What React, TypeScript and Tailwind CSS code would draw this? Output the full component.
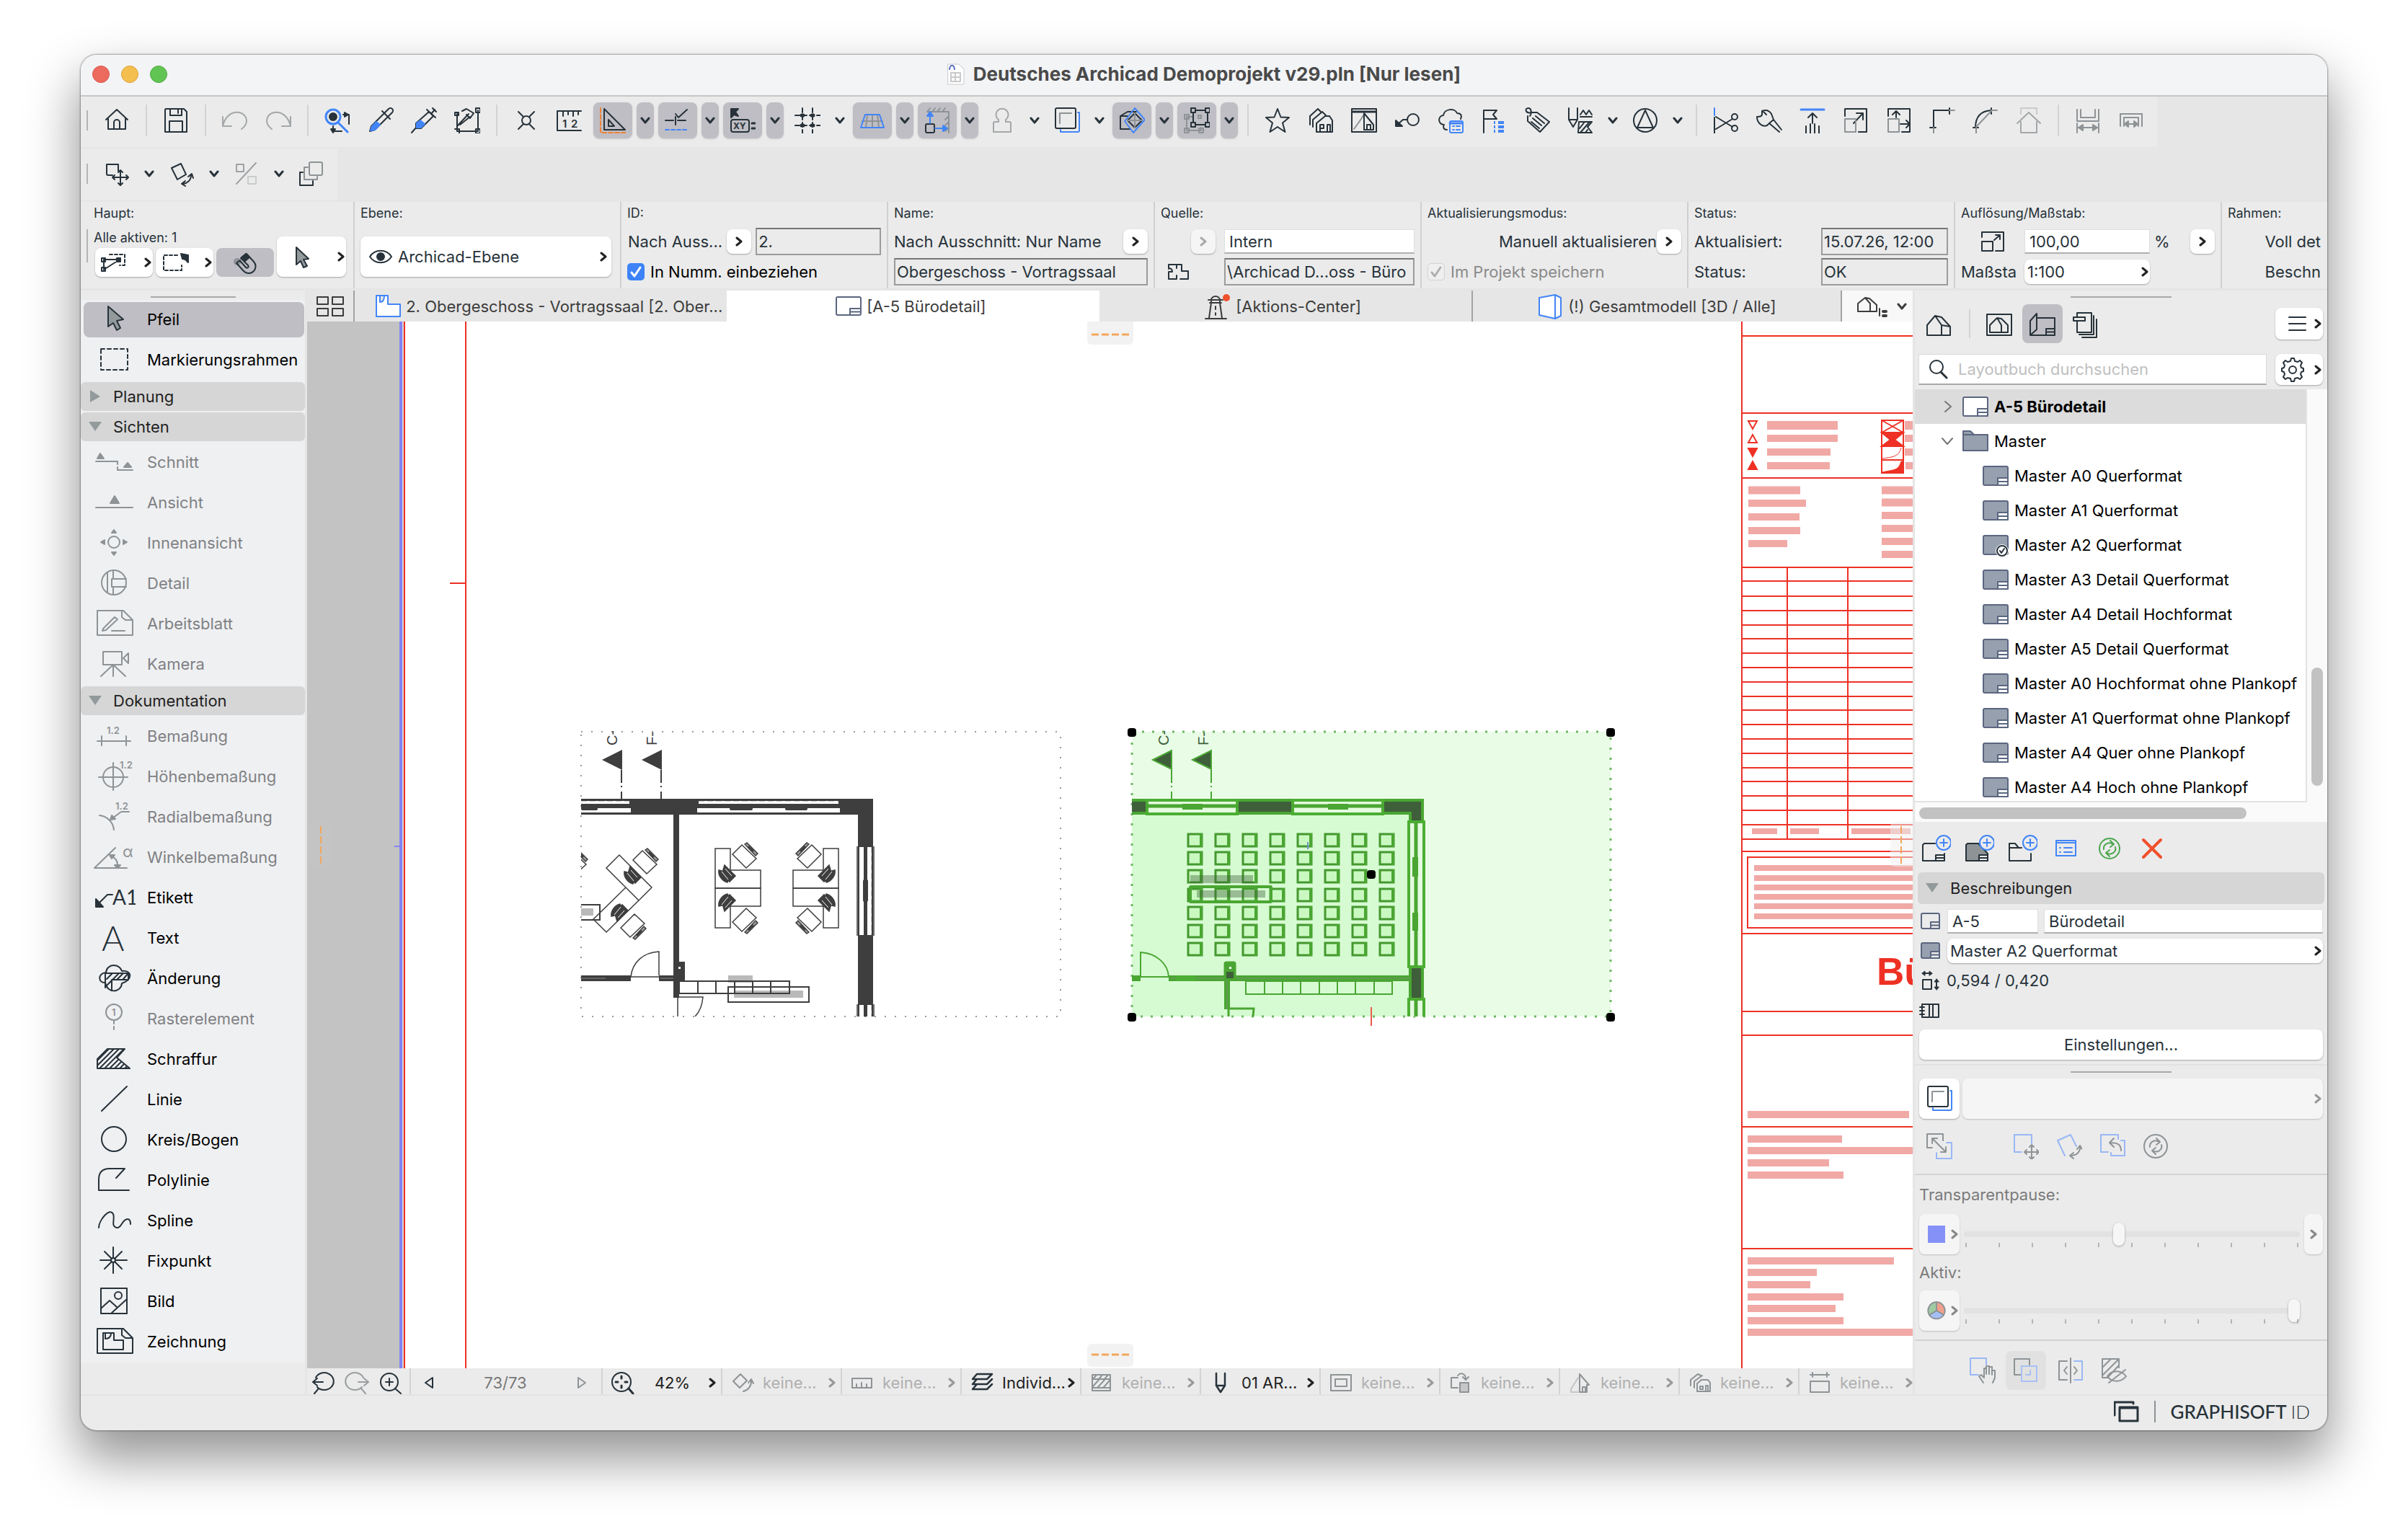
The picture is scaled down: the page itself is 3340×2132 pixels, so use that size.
import React from 'react';

const BLUE = '#4285f8';
const GRAY = '#8e9396';
const RED = '#ee3124';
const PINK = '#f1a9a6';
const INK = '#3e3e3e';
const GREEN = '#4aa632';

interface IconProps {
  w?: number;
  h?: number;
  className?: string;
  children?: React.ReactNode;
}

const Icon: React.FC<IconProps> = ({ w = 36, h = 36, className = '', children }) => (
  <svg
    width={w}
    height={h}
    viewBox={`0 0 ${w} ${h}`}
    fill="none"
    stroke="currentColor"
    strokeWidth={2}
    strokeLinecap="round"
    strokeLinejoin="round"
    className={`shrink-0 ${className}`}
    aria-hidden="true"
  >
    {children}
  </svg>
);

const Down = () => (
  <Icon w={14} h={10}>
    <path d="M2 2 7 8 12 2" strokeWidth={3} />
  </Icon>
);

const Right: React.FC<{ className?: string }> = ({ className = 'text-[#222]' }) => (
  <Icon w={10} h={14} className={className}>
    <path d="M2 2 8 7 2 12" strokeWidth={3} />
  </Icon>
);

/* ---------- toolbar icons, 36 x 36 ---------- */

const pagesIcon = (
  <>
    <rect x="2" y="1" width="28" height="28" rx="2" />
    <path d="M8 22V8H24" stroke={GRAY} />
    <path d="M9 31V34H33a2 2 0 0 0 2-2V7H33" stroke={BLUE} />
  </>
);

const houseIcon = (
  <>
    <path d="M2 32V18L13 5 22 18V32Z M13 5 22 7 34 20V32H22 M22 18 34 20" />
  </>
);

const toolbarIcons: Record<string, React.ReactNode> = {
  home: <path d="M3 17 18 3 33 17 M6 15V30H30V15 M14 30V21a4 4 0 0 1 8 0V30" />,
  save: <path d="M4 2H29L33 6V34H3V3Z M10 2V11H26V2 M21 2V8 M9 34V19H27V34" />,
  undo: <path d="M1 13V26H13 M1 26C4 13 13 5 24 7 35 10 38 22 27 30" stroke="#a4a7a9" />,
  redo: <path d="M35 13V26H23 M35 26C32 13 23 5 12 7 1 10-2 22 9 30" stroke="#a4a7a9" />,
  find: (
    <>
      <circle cx="12" cy="13" r="10" stroke={BLUE} strokeWidth={3} />
      <circle cx="12" cy="13" r="5" fill="currentColor" />
      <path d="M19 21 32 34" stroke={BLUE} strokeWidth={3} />
      <path d="M26 10H34V23 M12 26V33H24" />
      <path d="M28 7v6l5-3Z M9 30h6l-3 5Z" fill="currentColor" />
    </>
  ),
  pipette: (
    <>
      <path d="M3 33 5 26 25 6 29 2a3 3 0 0 1 5 5L30 11 10 31Z M20 5 31 16" />
      <path d="M4 32 6 26 12 20 17 24 10 31Z" fill={BLUE} stroke={BLUE} />
    </>
  ),
  syringe: (
    <>
      <path d="M1 35 7 28V22L25 6 31 12 14 29H7 M22 3 34 14 M28 9 33 3 M30 1 35 6" />
      <path d="M8 28V22L13 18 19 23 14 28Z" fill={BLUE} stroke={BLUE} />
    </>
  ),
  transfer: (
    <>
      <path d="M4 9V33H33V4 M1 30H7V36 M30 30h6v6H30Z M30 1h6v6H30Z M1 7h5v4H1Z" strokeWidth={2} />
      <path d="M4 26 20 9 M11 5 17 2 27 8 22 15 17 10 M8 24 22 13" />
    </>
  ),
  cross: (
    <>
      <path d="M7 6 14 13 M29 6 22 13 M7 30 14 23 M29 30 22 23" />
      <circle cx="18" cy="18" r="6" />
    </>
  ),
  ruler: (
    <>
      <path d="M34 5H1V32H34 M9 5V12 M16 5V10 M23 5V12 M30 5V10" />
      <text x="8" y="28" fontSize="15" fontWeight="600" fill="currentColor" stroke="none">1</text>
      <text x="20" y="28" fontSize="15" fontWeight="600" fill="currentColor" stroke="none">2</text>
    </>
  ),
  square: (
    <>
      <path d="M6 2 35 31H6Z M12 17V26H20Z" />
      <path d="M1 1V35H36" stroke="#f08233" strokeDasharray="6 3" />
    </>
  ),
  guide: (
    <>
      <path d="M1 18H12 M18 18H29 M15 13V24 M15 9 19 14 31 3" />
      <path d="M1 31H30" stroke={BLUE} strokeDasharray="5 3" />
    </>
  ),
  tracker: (
    <>
      <path d="M2 2H12L8 6 12 12 6 10 2 14Z" fill="currentColor" />
      <rect x="2" y="17" width="25" height="17" rx="3" />
      <text x="5" y="30" fontSize="12" fontWeight="700" fill="currentColor" stroke="none">XY</text>
      <path d="M31 22H35 M31 29H35" strokeWidth={3} />
    </>
  ),
  grid: (
    <>
      <path d="M11 1V36 M25 1V36" strokeDasharray="6 4" />
      <path d="M1 11H36 M1 25H36" strokeDasharray="6 4" />
      <path d="M10 11h2 M24 11h2 M10 25h2 M24 25h2" strokeWidth={5} />
    </>
  ),
  plane: (
    <>
      <path d="M18 10V28 M11 10 9 28 M25 10 27 28 M4 19H32" stroke={GRAY} />
      <path d="M8 10H28L34 28H2Z" stroke={BLUE} />
    </>
  ),
  snap: (
    <>
      <path d="M4 6H34V36 M4 6 8 1 M11 6 15 1 M18 6 22 1 M25 6 29 1 M34 12 29 17 M34 20 29 25 M34 28 29 33" stroke={GRAY} />
      <rect x="2" y="23" width="12" height="12" rx="2" />
      <path d="M8 22V10 M15 29H26" stroke={BLUE} />
      <path d="M4 12H12L8 6Z M26 25V33L32 29Z" stroke={BLUE} fill={BLUE} />
    </>
  ),
  stamp: (
    <path d="M13 17a8.500 8.500 0 1 1 10 0V20H28a2 2 0 0 1 2 2V34H6V22a2 2 0 0 1 2-2H13Z" stroke="#a4a7a9" />
  ),
  pages: pagesIcon,
  cube: (
    <>
      <path d="M2 12 12 6H24 M2 12V30H16 M2 12H12" />
      <path d="M22 8 32 18 22 28 12 18Z" />
      <path d="M22 8V28 M12 18H32" stroke={GRAY} />
      <path d="M22 1 36 17 20 35 8 19Z" stroke={BLUE} />
    </>
  ),
  group: (
    <>
      <path d="M4 13H12 M4 13V32H24V28" stroke={GRAY} />
      <path d="M1 10h6v6H1Z M1 29h6v6H1Z M21 29h6v6h-6Z M20 11h4v4h-4Z" stroke={GRAY} />
      <path d="M13 4H33V24H13Z" />
      <path d="M10 1h6v6h-6Z M30 1h6v6h-6Z M10 21h6v6h-6Z M30 21h6v6h-6Z" fill="#bdbdc2" />
    </>
  ),
  star: <path d="M18 2 22.500 13.500 34 14 25 21.500 28.500 34 18 27 7.500 34 11 21.500 2 14 13.500 13.500Z" />,
  houses: (
    <>
      <path d="M3 24V12L14 2 18 6 M7 27V17L20 6 25 11" />
      <path d="M12 34V22L24 12H30L34 18V34Z M17 34V25 M17 24h5v5h-5Z M27 34V24h4V34" />
    </>
  ),
  frameHouse: (
    <>
      <rect x="1" y="2" width="34" height="32" />
      <path d="M1 6H35" strokeWidth={3} />
      <path d="M4 30 14 16 17 11" stroke={GRAY} />
      <path d="M18 8V31H31V24Z M22 31V24h5V31" />
    </>
  ),
  leader: (
    <>
      <circle cx="26" cy="17" r="8" />
      <path d="M18 17H12L4 24" />
      <path d="M2 18V26H11Z" fill="currentColor" />
    </>
  ),
  cloud: (
    <>
      <path d="M13 31C8 31 7 27 9 24 0 23 0 12 8 11 9 2 24 0 27 8 33 8 34 12 32 16" />
      <rect x="17" y="19" width="18" height="16" rx="2" stroke={BLUE} fill="#ebebeb" />
      <path d="M17 22H35" stroke={BLUE} strokeWidth={3} />
      <path d="M21 26H23 M26 26H31 M21 31H23 M26 31H31" stroke={BLUE} />
    </>
  ),
  flag: (
    <>
      <path d="M4 35V4H22L17 10 22 16H4" />
      <path d="M18 21H20 M24 21H32 M18 27H20 M24 27H32 M18 33H20 M24 33H32" stroke={BLUE} strokeWidth={4} strokeLinecap="butt" />
    </>
  ),
  tag: (
    <>
      <path d="M10 7H18L35 20 22 34 5 19V12 M12 15 24 25 M16 12 28 22 M10 20 21 29" />
      <path d="M10 7C2 9 0 1 6 1 10 1 11 8 8 12" />
    </>
  ),
  penHatch: (
    <>
      <path d="M2 1V17L8 27 14 17V1 M2 17H14" />
      <path d="M18 10 22 4 26 10 30 4 34 10 M18 13H34" />
      <path d="M16 20H34L28 27 34 35H15Z M17 29 24 20 M18 35 30 21 M25 35 28 31" />
    </>
  ),
  prism: (
    <>
      <circle cx="18" cy="18" r="16" />
      <path d="M18 4 7 28H29Z" />
    </>
  ),
  split: (
    <>
      <path d="M2 1V11" stroke={BLUE} />
      <path d="M2 14V36 M4 13 27 27 M4 30 27 16" />
      <circle cx="30" cy="13" r="4" />
      <circle cx="30" cy="29" r="4" />
    </>
  ),
  wrench: (
    <path d="M1 13C4 12 7 14 8 10V5C13 3 18 4 21 9L24 17 35 31M1 13C1 20 7 28 15 25L18 22 32 34M18 22 24 17 M9 5 14 10" />
  ),
  elevate: (
    <>
      <path d="M2 3H34" stroke={BLUE} strokeWidth={3} />
      <path d="M18 9V22 M12 14 18 8 24 14 M9 26V36 M15 23V36 M21 23V36 M27 26V36" />
    </>
  ),
  resize: (
    <>
      <path d="M3 12V2H33V34H22 M15 22 28 8 M19 8H28V17" />
      <path d="M3 16H18V34H3Z" stroke={GRAY} />
    </>
  ),
  stretch: (
    <>
      <path d="M3 12V2H33V34H22 M14 14V6 M9 10 14 5 19 10 M20 23H32 M28 18 33 23 28 28" />
      <path d="M3 16H18V34H3Z" stroke={GRAY} />
    </>
  ),
  corner: (
    <>
      <path d="M6 28V4H28 M28 1V9 M1 28H9" />
      <path d="M28 4H35 M6 28V36" stroke={GRAY} />
    </>
  ),
  fillet: (
    <>
      <path d="M4 28C4 14 10 5 26 4 M26 1V9 M1 28H8" />
      <path d="M26 4H34 M5 27 26 5 M5 28V36" stroke={GRAY} />
    </>
  ),
  roof: (
    <>
      <path d="M7 9V1H29V9" stroke="#c9cbcc" />
      <path d="M2 22 18 7 34 22 M7 20V35H29V20" stroke="#a4a7a9" />
    </>
  ),
  dimA: (
    <>
      <path d="M3 3V19H33V3 M8 3V14H28V3 M3 22V35 M33 22V35 M5 28H31" stroke={GRAY} />
      <path d="M5 28 11 24V32Z M31 28 25 24V32Z" stroke={GRAY} fill={GRAY} />
    </>
  ),
  dimB: (
    <>
      <path d="M3 26V9H33V26 M8 26V14H28V26 M12 23H24" stroke={GRAY} />
      <path d="M9 23 14 19V27Z M27 23 22 19V27Z" stroke={GRAY} fill={GRAY} />
    </>
  ),
  move: (
    <>
      <path d="M12 20H6a2 2 0 0 1-2-2V5H20V14" />
      <path d="M23 14V33 M13 23H33 M20 16 23 13 26 16 M20 31 23 34 26 31 M15 20 12 23 15 26 M31 20 34 23 31 26" />
    </>
  ),
  rotate: (
    <>
      <path d="M4 10 17 4 24 19 12 26Z" />
      <path d="M31 20C31 27 26 31 20 32 M27 22 32 18 34 24 M23 28 18 32 23 35" />
    </>
  ),
  mirror: (
    <>
      <path d="M4 5H14V15H4Z M31 3 4 32" stroke="#9fa2a4" />
      <path d="M20 22H31V32H20Z" stroke="#c9cbcc" />
    </>
  ),
  copies: (
    <>
      <rect x="15" y="2" width="18" height="18" rx="2" stroke={GRAY} />
      <path d="M13 9H8V26H26V22" stroke={GRAY} />
      <path d="M6 16H2V34H20V28" />
    </>
  ),
};

type Tool = { icon: string; menu?: boolean; on?: boolean };

const mainTools: (Tool | null)[] = [
  { icon: 'home' }, null, { icon: 'save' }, null, { icon: 'undo' }, { icon: 'redo' }, null,
  { icon: 'find' }, { icon: 'pipette' }, { icon: 'syringe' }, { icon: 'transfer' }, null,
  { icon: 'cross' }, { icon: 'ruler' },
  { icon: 'square', menu: true, on: true },
  { icon: 'guide', menu: true, on: true },
  { icon: 'tracker', menu: true, on: true },
  { icon: 'grid', menu: true },
  { icon: 'plane', menu: true, on: true },
  { icon: 'snap', menu: true, on: true },
  { icon: 'stamp', menu: true },
  { icon: 'pages', menu: true },
  { icon: 'cube', menu: true, on: true },
  { icon: 'group', menu: true, on: true },
  null,
  { icon: 'star' }, { icon: 'houses' }, { icon: 'frameHouse' }, { icon: 'leader' }, { icon: 'cloud' },
  { icon: 'flag' }, { icon: 'tag' }, { icon: 'penHatch', menu: true }, { icon: 'prism', menu: true },
  null,
  { icon: 'split' }, { icon: 'wrench' }, { icon: 'elevate' }, { icon: 'resize' }, { icon: 'stretch' },
  { icon: 'corner' }, { icon: 'fillet' }, { icon: 'roof' },
  null,
  { icon: 'dimA' }, { icon: 'dimB' },
];

const editTools: Tool[] = [
  { icon: 'move', menu: true },
  { icon: 'rotate', menu: true },
  { icon: 'mirror', menu: true },
  { icon: 'copies' },
];

const ToolButton: React.FC<Tool> = ({ icon, menu, on }) => {
  const look = on ? 'bg-[#bfbec4] shadow-sm' : '';
  return (
    <>
      <button aria-label={icon} className={`flex h-[50px] w-[54px] shrink-0 items-center justify-center rounded-lg ${look}`}>
        <Icon>{toolbarIcons[icon]}</Icon>
      </button>
      {menu && (
        <button aria-label={`${icon} menu`} className={`flex h-[50px] w-6 shrink-0 items-center justify-center rounded-lg ${look}`}>
          <Down />
        </button>
      )}
    </>
  );
};

const Grip = () => <div className="h-7 w-0.5 shrink-0 bg-[#b4b4b4]" />;

const Toolbars = () => (
  <div className="flex flex-col items-start gap-0.5 bg-[#e6e6e6]">
    <div className="flex h-[70px] items-center gap-1.5 bg-[#ebebeb] pb-1 pl-2 pr-[9px]">
      <Grip />
      <span className="w-px" />
      {mainTools.map((tool, i) =>
        tool ? (
          <ToolButton key={i} {...tool} />
        ) : (
          <div key={i} className="flex w-4 shrink-0 justify-center">
            <div className="h-11 w-0.5 bg-[#d3d3d3]" />
          </div>
        )
      )}
    </div>
    <div className="flex h-[72px] items-center gap-1.5 bg-[#ebebeb] pb-0.5 pl-2 pr-[9px]">
      <Grip />
      <span className="w-px" />
      {editTools.map((tool) => (
        <ToolButton key={tool.icon} {...tool} />
      ))}
    </div>
  </div>
);

/* ---------- info box ---------- */

const InfoCell: React.FC<{ label: string; children: React.ReactNode; className?: string }> = ({
  label,
  children,
  className = 'w-[370px]',
}) => (
  <div className={`flex shrink-0 flex-col border-l-2 border-[#d0d0d0] pl-2 pr-2 ${className}`}>
    <div className="h-[34px] pt-1 text-[18px] leading-6">{label}</div>
    {children}
  </div>
);

const ArrowButton: React.FC<{ name: string; disabled?: boolean }> = ({ name, disabled }) => (
  <button
    aria-label={name}
    disabled={disabled}
    className={`flex h-[34px] w-[34px] shrink-0 items-center justify-center rounded-lg shadow-[0_1px_2px_rgba(0,0,0,0.3)] ${disabled ? 'bg-[#f5f5f5]' : 'bg-white'}`}
  >
    <Right className={disabled ? 'text-[#aaa]' : 'text-[#222]'} />
  </button>
);

const Sunken: React.FC<{ name: string; value: string; className?: string }> = ({ name, value, className = '' }) => (
  <input
    aria-label={name}
    readOnly
    value={value}
    className={`h-[38px] min-w-0 border-2 border-[#9b9b9b] border-t-[#767676] bg-[#ebebeb] px-0.5 ${className}`}
  />
);

const PlainField: React.FC<{ name: string; value: string; className?: string }> = ({ name, value, className = '' }) => (
  <input
    aria-label={name}
    defaultValue={value}
    className={`h-[34px] min-w-0 border border-b-2 border-[#dedede] border-b-[#b0b0b0] bg-white px-1.5 ${className}`}
  />
);

const CheckBox: React.FC<{ label: string; disabled?: boolean }> = ({ label, disabled }) => (
  <label className={`flex items-center gap-2 ${disabled ? 'text-[#8a8a8a]' : 'text-black'}`}>
    <span className="relative flex">
      <input
        type="checkbox"
        defaultChecked
        disabled={disabled}
        className="h-6 w-6 appearance-none rounded-[5px] bg-[#3d83f7] disabled:border disabled:border-[#d2d2d2] disabled:bg-[#efefef]"
      />
      <Icon w={24} h={24} className={`pointer-events-none absolute inset-0 ${disabled ? 'text-[#b0b0b0]' : 'text-white'}`}>
        <path d="M6 13 10 18 18 6" strokeWidth={3} />
      </Icon>
    </span>
    {label}
  </label>
);

const InfoBox = () => (
  <div className="flex h-[123px] overflow-hidden border-b-[3px] border-[#e5e5e5] whitespace-nowrap">
    <div className="flex w-[378px] shrink-0 pl-2">
      <div className="mt-[38px] h-[46px] w-0.5 bg-[#b4b4b4]" />
      <div className="flex flex-col pl-2 text-[18px] leading-6">
        <div className="h-[38px] pt-1">Haupt:</div>
        <div className="flex items-end gap-1">
          <div>
            <div className="h-[26px]">Alle aktiven: 1</div>
            <div className="flex gap-1 pl-0.5">
              <button aria-label="Auswahlmethode" className="flex h-10 w-20 items-center justify-between rounded-lg bg-white pl-2 pr-0.5 shadow-[0_1px_2px_rgba(0,0,0,0.3)]">
                <Icon w={36} h={28}>
                  <path d="M12 3H33V18H26" strokeDasharray="4 3" />
                  <path d="M4 24V10H26L4 24 M1 8h5v5H1Z M22 8h5v5h-5Z M1 21h5v5H1Z" />
                </Icon>
                <Right />
              </button>
              <button aria-label="Markierung" className="flex h-10 w-20 items-center justify-between rounded-lg bg-white pl-2 pr-0.5 shadow-[0_1px_2px_rgba(0,0,0,0.3)]">
                <Icon w={38} h={28}>
                  <path d="M22 4H3V25H28V18" strokeDasharray="4 3" />
                  <path d="M27 2 37 4V14L33 10 29 9Z" fill="currentColor" />
                </Icon>
                <Right />
              </button>
              <button aria-label="Magnet" className="flex h-10 w-20 items-center justify-center rounded-lg bg-[#bfbec4]">
                <Icon w={36} h={32}>
                  <circle cx="7" cy="15" r="5" fill="#8e9396" stroke="none" />
                  <path d="M20 4 30 15A9 9 0 0 1 16 28L6 17 M12 10 22 20A1 1 0 0 1 19 23L11 14 M20 4 13 10 M11 13 6 17" />
                  <path d="M19 4 24 9 18 14 13 9Z" fill="currentColor" />
                </Icon>
              </button>
            </div>
          </div>
          <button aria-label="Pfeilwerkzeug" className="flex h-14 w-24 items-center justify-between rounded-lg bg-white pl-6 pr-0.5 shadow-[0_1px_2px_rgba(0,0,0,0.3)]">
            <Icon w={24} h={32}>
              <path d="M3 3 20 19 13 20 18 29 13 31 9 22 3 27Z" fill="#939a9c" />
            </Icon>
            <Right />
          </button>
        </div>
      </div>
    </div>

    <InfoCell label="Ebene:">
      <button className="mt-3.5 flex h-14 w-[348px] items-center rounded-lg bg-white pl-3 pr-1.5 shadow-[0_1px_2px_rgba(0,0,0,0.3)]">
        <Icon w={32} h={24}>
          <path d="M1 12C8 1 24 1 31 12 24 23 8 23 1 12Z" />
          <circle cx="16" cy="12" r="5" fill="currentColor" />
        </Icon>
        <span className="flex-1 pl-2 text-left">Archicad-Ebene</span>
        <Right />
      </button>
    </InfoCell>

    <InfoCell label="ID:">
      <div className="flex h-[42px] items-center gap-1.5">
        <span className="pl-px">Nach Auss...</span>
        <ArrowButton name="ID-Quelle" />
        <Sunken name="ID" value="2." className="flex-1" />
      </div>
      <div className="flex h-[42px] items-center">
        <CheckBox label="In Numm. einbeziehen" />
      </div>
    </InfoCell>

    <InfoCell label="Name:">
      <div className="flex h-[42px] items-center justify-between">
        <span>Nach Ausschnitt: Nur Name</span>
        <ArrowButton name="Namensquelle" />
      </div>
      <div className="flex h-[42px] items-center">
        <Sunken name="Name" value="Obergeschoss - Vortragssaal" className="flex-1" />
      </div>
    </InfoCell>

    <InfoCell label="Quelle:">
      <div className="flex h-[42px] items-center gap-3 pl-[42px]">
        <ArrowButton name="Quelle wählen" disabled />
        <PlainField name="Quelle" value="Intern" className="flex-1" />
      </div>
      <div className="flex h-[42px] items-center justify-between pl-2.5">
        <Icon w={30} h={24}>
          <path d="M1 8V2H19V11H28V22H17 M11 22H1V12 M1 12H6 M12 2V7 M12 17V22 M1 7C4 7 6 9 6 12" />
        </Icon>
        <Sunken name="Pfad" value="\Archicad D...oss - Büro" className="w-[264px]" />
      </div>
    </InfoCell>

    <InfoCell label="Aktualisierungsmodus:">
      <div className="flex h-[42px] items-center justify-end">
        <span>Manuell aktualisieren</span>
        <ArrowButton name="Aktualisierungsmodus" />
      </div>
      <div className="flex h-[42px] items-center">
        <CheckBox label="Im Projekt speichern" disabled />
      </div>
    </InfoCell>

    <InfoCell label="Status:">
      <div className="flex h-[42px] items-center justify-between">
        <span>Aktualisiert:</span>
        <Sunken name="Aktualisiert" value="15.07.26, 12:00" className="w-44" />
      </div>
      <div className="flex h-[42px] items-center justify-between">
        <span>Status:</span>
        <Sunken name="Status" value="OK" className="w-44" />
      </div>
    </InfoCell>

    <InfoCell label="Auflösung/Maßstab:">
      <div className="flex h-[42px] items-center">
        <Icon w={36} h={32} className="ml-[26px] mr-[26px]">
          <path d="M3 10V3H33V29H22 M20 14 28 7 M22 7H28V13 M3 16H18V29H3Z" />
        </Icon>
        <PlainField name="Auflösung" value="100,00" className="w-[174px]" />
        <span className="pl-1.5">%</span>
        <span className="ml-auto">
          <ArrowButton name="Einheit" />
        </span>
      </div>
      <div className="flex h-[42px] items-center">
        <span className="w-[88px]">Maßsta</span>
        <button className="flex h-[34px] w-[174px] items-center justify-between rounded-lg bg-white pl-1 pr-0.5 shadow-[0_1px_2px_rgba(0,0,0,0.3)]">
          1:100
          <Right />
        </button>
      </div>
    </InfoCell>

    <InfoCell label="Rahmen:" className="w-[147px]">
      <div className="flex h-[42px] items-center justify-end">Voll det</div>
      <div className="flex h-[42px] items-center justify-end">Beschn</div>
    </InfoCell>
  </div>
);

/* ---------- tool palette, 60 x 40 icons ---------- */

const hatch = 'M-10 40 30 0 M-3 40 37 0 M4 40 44 0 M11 40 51 0 M18 40 58 0 M25 40 65 0 M32 40 72 0 M39 40 79 0';

const paletteIcons: Record<string, React.ReactNode> = {
  Pfeil: <path d="M22 3 43 21 34 23 39 33 34 36 29 26 22 31Z" fill="#939a9c" />,
  Markierungsrahmen: <rect x="12" y="6" width="37" height="29" strokeDasharray="5 4" />,
  Schnitt: (
    <>
      <path d="M5 20H35 M35 32H56" />
      <path d="M35 20V31" strokeDasharray="4 4" />
      <path d="M7 16H16L11 9Z M44 28H54L49 22Z" fill="currentColor" />
    </>
  ),
  Ansicht: (
    <>
      <path d="M5 28H56" />
      <path d="M25 22H37L31 12Z" fill="currentColor" />
    </>
  ),
  Innenansicht: (
    <>
      <circle cx="30" cy="20" r="8" />
      <path d="M27 7H33L30 3Z M27 34H33L30 38Z M17 17V23L12 20Z M43 17V23L48 20Z" fill="currentColor" />
    </>
  ),
  Detail: (
    <>
      <circle cx="30" cy="20" r="17" />
      <path d="M21 6V34 M29 3V15 M29 26V37 M27 15H47 M27 26H47 M27 15V26" />
    </>
  ),
  Arbeitsblatt: (
    <>
      <path d="M7 3H43L56 16V37H7Z M41 3V12L46 16H56" />
      <path d="M15 28 31 12 35 15 19 30 14 31Z M27 31H45" />
    </>
  ),
  Kamera: <path d="M15 4H41V22H15Z M43 13 50 6V20Z M29 22V38 M29 22 12 38 M29 22 46 38" />,
  Bemaßung: (
    <>
      <path d="M7 28H53 M13 21V34 M47 21V34" />
      <text x="20" y="18" fontSize="13" fontWeight="600" fill="currentColor" stroke="none">1.2</text>
    </>
  ),
  Höhenbemaßung: (
    <>
      <circle cx="29" cy="22" r="14" />
      <path d="M9 22H49 M29 2V40" />
      <text x="38" y="10" fontSize="13" fontWeight="600" fill="currentColor" stroke="none">1.2</text>
    </>
  ),
  Radialbemaßung: (
    <>
      <path d="M10 19C20 20 29 28 30 39 M51 14H40L28 23" />
      <path d="M25 25 27 19 32 24Z" fill="currentColor" />
      <text x="32" y="11" fontSize="13" fontWeight="600" fill="currentColor" stroke="none">1.2</text>
    </>
  ),
  Winkelbemaßung: (
    <>
      <path d="M32 8 3 36H48 M27 20C32 22 35 26 35 32" />
      <path d="M24 18H31L27 23Z M31 32H39L35 36Z" fill="currentColor" />
      <text x="42" y="21" fontSize="22" fill="currentColor" stroke="none">α</text>
    </>
  ),
  Etikett: (
    <>
      <path d="M28 17H21L9 29" />
      <path d="M5 23V34H15Z" fill="currentColor" />
      <text x="28" y="31" fontSize="28" fontFamily="Lato" fill="currentColor" stroke="none">A1</text>
    </>
  ),
  Text: <text x="13" y="39" fontSize="48" fontWeight="300" fontFamily="Lato" fill="currentColor" stroke="none">A</text>,
  Änderung: (
    <>
      <path d="M18 27C8 28 7 14 19 13 20 0 38 0 41 11 56 9 56 24 41 28 40 42 20 42 18 27Z" />
      <path d="M18 14H50V23H27V38 M18 14V34 M20 22 27 15 M20 31 36 15 M35 22 42 15 M43 22 49 15" />
    </>
  ),
  Rasterelement: (
    <>
      <circle cx="30" cy="12" r="11" />
      <path d="M30 24V40" strokeDasharray="4 4" />
      <text x="27" y="17" fontSize="13" fontWeight="600" fill="currentColor" stroke="none">1</text>
    </>
  ),
  Schraffur: (
    <>
      <clipPath id="fill-area">
        <path d="M7 21 21 7H45L34 19 52 34H7Z" />
      </clipPath>
      <path d={hatch} clipPath="url(#fill-area)" />
      <path d="M7 21 21 7H45L34 19 52 34H7Z" />
    </>
  ),
  Linie: <path d="M13 37 48 3" />,
  'Kreis/Bogen': <circle cx="30" cy="20" r="17" />,
  Polylinie: <path d="M51 35H9V20C9 10 14 5 24 5H45L33 18" />,
  Spline: <path d="M9 31C9 21 24 2 29 12 32 19 25 29 34 31 41 32 41 19 49 19 53 19 53 23 53 26" />,
  Fixpunkt: (
    <>
      <circle cx="29" cy="20" r="3" />
      <path d="M29 17V2 M29 23V38 M26 20H11 M32 20H48 M27 18 17 8 M31 18 41 8 M27 22 17 32 M31 22 41 32" />
    </>
  ),
  Bild: (
    <>
      <rect x="12" y="3" width="36" height="35" />
      <circle cx="36" cy="13" r="5" />
      <path d="M12 31 24 20 34 29 M27 37 48 18" />
    </>
  ),
  Zeichnung: (
    <>
      <path d="M7 3H43L56 16V37H7Z M41 3V12L46 16H56" />
      <path d="M15 9H30V19H43V32H15Z M18 9V17C24 17 26 14 26 9" />
    </>
  ),
};

const sections: { title?: string; open?: boolean; items: string[] }[] = [
  { items: ['Pfeil', 'Markierungsrahmen'] },
  { title: 'Planung', items: [] },
  { title: 'Sichten', open: true, items: ['Schnitt', 'Ansicht', 'Innenansicht', 'Detail', 'Arbeitsblatt', 'Kamera'] },
  {
    title: 'Dokumentation',
    open: true,
    items: [
      'Bemaßung', 'Höhenbemaßung', 'Radialbemaßung', 'Winkelbemaßung', 'Etikett', 'Text', 'Änderung', 'Rasterelement',
      'Schraffur', 'Linie', 'Kreis/Bogen', 'Polylinie', 'Spline', 'Fixpunkt', 'Bild', 'Zeichnung',
    ],
  },
];

const disabledTools = new Set([
  'Schnitt', 'Ansicht', 'Innenansicht', 'Detail', 'Arbeitsblatt', 'Kamera',
  'Bemaßung', 'Höhenbemaßung', 'Radialbemaßung', 'Winkelbemaßung', 'Rasterelement',
]);

const Triangle: React.FC<{ open?: boolean }> = ({ open }) => (
  <Icon w={18} h={18} className="text-[#939a9c]">
    <path d={open ? 'M0 2H18L9 15Z' : 'M2 0V17L16 9Z'} fill="currentColor" stroke="none" />
  </Icon>
);

const DragHandle: React.FC<{ className: string }> = ({ className }) => (
  <div className={`mx-auto h-0.5 bg-[#a9a9a9] ${className}`} />
);

const ToolPalette = () => (
  <aside className="w-[314px] shrink-0 border-r-[3px] border-[#e5e5e5] pb-11">
    <div className="h-[13px] pt-2">
      <DragHandle className="w-[118px]" />
    </div>
    <div className="bg-[#eff0f2]">
      {sections.map((section, i) => (
        <section key={i}>
          {section.title && (
            <button className="my-0.5 flex h-10 w-full items-center gap-4 rounded-md bg-[#d6d6d6] pl-[11px]">
              <Triangle open={section.open} />
              <span className="text-[#222]">{section.title}</span>
            </button>
          )}
          {section.items.map((name) => {
            const disabled = disabledTools.has(name);
            return (
              <div key={name} className="flex h-14 items-center pb-0.5 pl-1 pr-px">
                <button
                  disabled={disabled}
                  className={`flex h-[49px] w-full items-center gap-4 rounded-lg pl-3 ${name === 'Pfeil' ? 'bg-[#bfbec4]' : ''} ${disabled ? 'text-[#8e9396]' : ''}`}
                >
                  <Icon w={60} h={42}>{paletteIcons[name]}</Icon>
                  <span className={disabled ? 'text-[#7f8184]' : 'text-black'}>{name}</span>
                </button>
              </div>
            );
          })}
        </section>
      ))}
    </div>
  </aside>
);

/* ---------- document tabs ---------- */

const tabs = [
  {
    text: '2. Obergeschoss - Vortragssaal [2. Ober...',
    align: 'justify-end pr-1.5',
    icon: <path d="M2 3H18V15H35V32H2Z M7 3V12C12 12 13 8 13 3" stroke={BLUE} fill="#fff" />,
  },
  {
    text: '[A-5 Bürodetail]',
    active: true,
    align: 'justify-center pr-1.5',
    icon: (
      <g stroke="#5b6680">
        <rect x="1" y="5" width="34" height="25" rx="2" />
        <path d="M20 30V21H35 M20 25.500H35" />
      </g>
    ),
  },
  {
    text: '[Aktions-Center]',
    align: 'justify-center border-r-2 border-[#a3a3a3] pr-1.5',
    icon: (
      <>
        <path d="M9 9a6 5 0 0 1 12 0 M5 9H25 M7 13H23 M9 13 6 34 M21 13 24 34 M1 35H30 M15 18V22 M15 27V30 M9 9V13 M21 9V13" />
        <circle cx="30" cy="6" r="5" fill="#f0502c" stroke="none" />
      </>
    ),
  },
  {
    text: '(!) Gesamtmodell [3D / Alle]',
    align: 'justify-center border-r-2 border-[#a3a3a3]',
    icon: <path d="M3 6 25 2 33 6V31L25 35 3 30Z M25 2V35" stroke={BLUE} fill="#fff" />,
  },
];

const DocumentTabs = () => (
  <div className="flex h-[43px] shrink-0 bg-[#e6e6e6] text-[#3c3c3c]">
    <button aria-label="Übersicht" className="flex w-[66px] shrink-0 items-center justify-center border-r-2 border-[#a3a3a3]">
      <Icon w={40} h={30}>
        <path d="M2 2H17V12H2Z M23 2H38V12H23Z M2 18H17V28H2Z M23 18H38V28H23Z" />
      </Icon>
    </button>
    {tabs.map((tab) => (
      <button
        key={tab.text}
        className={`flex min-w-0 flex-1 items-center gap-[7px] overflow-hidden whitespace-nowrap ${tab.align} ${tab.active ? 'bg-white' : ''}`}
      >
        <Icon>{tab.icon}</Icon>
        {tab.text}
      </button>
    ))}
    <button aria-label="Ansicht wählen" className="flex w-[98px] shrink-0 items-center justify-between bg-[#f8f8f8] pl-5 pr-2">
      <Icon w={44} h={30}>
        <path d="M2 22V11L12 3 19 11V22Z M12 3 18 4 28 13V22H19" />
        <path d="M32 18V28" />
        <path d="M37 22H41 M37 28H41" strokeWidth={4} />
      </Icon>
      <Down />
    </button>
  </div>
);

/* ---------- drawing area ---------- */

const Chair = () => (
  <g>
    <path d="M1016 1185 1029 1172 1049 1191 1035 1204Z" />
    <path d="M1033 1171 1036 1169 1051 1184 1048 1187Z" fill="#999" />
    <path d="M1038 1174 1045 1181" strokeWidth={3} />
  </g>
);

const Computer = () => (
  <g fill={INK}>
    <path d="M1005 1200 1020 1215 1012 1223 1002 1210Z" />
    <path d="M997 1207C996 1214 1001 1222 1009 1224L1011 1220 1001 1208Z" />
    <path d="M1006 1205 1015 1215" stroke="#fff" strokeWidth={1} />
    <path d="M1001 1209 1010 1220" stroke="#fff" strokeWidth={1} />
  </g>
);

const DeskHalf = () => (
  <g>
    <path d="M992 1232V1177H1013V1207H1055V1232Z" />
    <Chair />
    <Computer />
  </g>
);

const DeskGroup = () => (
  <g>
    <DeskHalf />
    <g transform="translate(0 2464) scale(1 -1)">
      <DeskHalf />
    </g>
  </g>
);

const OfficePlan = () => (
  <g fill="none" stroke={INK} strokeWidth={1.500}>
    <clipPath id="office">
      <rect x="806" y="1014" width="666" height="396" />
    </clipPath>
    <rect x="806" y="1015" width="665" height="395" stroke="#9a9a9a" strokeWidth={2} strokeDasharray="2 12" />
    <g clipPath="url(#office)">
      <g fill={INK} stroke="none" fontSize="20" fontFamily="Liberation Sans">
        <text transform="translate(856 1034) rotate(-90)">C-</text>
        <text transform="translate(911 1034) rotate(-90)">F-</text>
        <path d="M835 1054 863 1040V1068Z M890 1054 918 1040V1068Z" />
        <path d="M861 1068h2v18h-2Z M861 1090h2v2h-2Z M861 1098h2v18h-2Z M916 1068h2v18h-2Z M916 1090h2v2h-2Z M916 1098h2v10h-2Z" />
        <path d="M806 1108H1211V1410H1190V1130H806Z" />
        <path d="M934 1130h8V1334h8V1361H942V1384H934Z M806 1353H875V1361H806Z M914 1353H936V1361H914Z" />
      </g>
      <g fill="#fff" stroke="none">
        <path d="M806 1111H873V1115H806Z M806 1121H875V1127H806Z M969 1111H1163V1115H969Z M967 1121H1165V1127H967Z" />
        <path d="M1192 1175h6V1297h-6Z M1203 1175h6V1297h-6Z M1192 1394h6V1410h-6Z M1203 1394h6V1410h-6Z M941 1341h3v3h-3Z" />
      </g>
      <path d="M806 1110.500H873 M969 1110.500H1163 M1209.500 1175V1297 M1209.500 1394V1410" strokeDasharray="8 4" />
      <path d="M1189 1174V1298 M1212 1174V1298 M1189 1393V1410 M1212 1393V1410" />
      <g fill={INK} stroke="none">
        <rect x="806" y="1115" width="23" height="9" rx="2" />
        <rect x="1012" y="1115" width="32" height="9" rx="2" />
        <rect x="1089" y="1115" width="31" height="9" rx="2" />
        <rect x="1197" y="1220" width="7" height="31" rx="2" />
      </g>
      <path d="M806 1357H840 M916 1357H934" stroke="#888" strokeWidth={1} />
      <path d="M914 1353V1320C892 1321 877 1335 875 1355H914" />
      <path d="M806 1255H832V1276H806" strokeWidth={2} />
      <g fill="#b9b9b9" stroke="none">
        <rect x="806" y="1260" width="17" height="10" />
        <rect x="1010" y="1353" width="34" height="10" />
        <rect x="1018" y="1374" width="96" height="10" />
      </g>
      <path d="M942 1361H1095V1378H942Z M968 1361V1378 M993 1361V1378 M1019 1361V1378 M1044 1361V1378 M1069 1361V1378" strokeWidth={2} />
      <path d="M1010 1369H1122V1390H1010Z" strokeWidth={2} />
      <path d="M940 1384V1410 M934 1383H975C974 1395 970 1404 964 1410" />
      <path d="M859 1186 841 1204 886 1249 904 1231Z M868 1231 886 1249 841 1293 823 1275Z" />
      <DeskGroup />
      <g transform="translate(2155 0) scale(-1 1)">
        <DeskGroup />
      </g>
      <g transform="translate(-138 8)"><Chair /></g>
      <g transform="translate(-236 8)"><Chair /></g>
      <g transform="translate(-131 2)"><Computer /></g>
      <g transform="translate(-155 2472) scale(1 -1)"><Chair /></g>
      <g transform="translate(-149 2478) scale(1 -1)"><Computer /></g>
    </g>
  </g>
);

const seatRows = [1156, 1181, 1206, 1232, 1257, 1282, 1307];
const seatCols = [1647, 1685, 1723, 1761, 1799, 1837, 1875, 1913];

const LecturePlan = () => (
  <g fill="none" stroke={GREEN} strokeWidth={3}>
    <clipPath id="lecture">
      <rect x="1570" y="1014" width="664" height="396" />
    </clipPath>
    <rect x="1570" y="1015" width="664" height="395" fill="#e8fce6" stroke="none" />
    <rect x="1570" y="1108" width="404" height="302" fill="#d6fbd2" stroke="none" />
    <rect x="1570" y="1015" width="664" height="395" stroke="#6fb765" strokeDasharray="3 11" />
    <g clipPath="url(#lecture)">
      <g fill="#3e5f3a" stroke="none" fontSize="20" fontFamily="Liberation Sans">
        <text transform="translate(1621 1034) rotate(-90)">C-</text>
        <text transform="translate(1676 1034) rotate(-90)">F-</text>
        <path d="M1570 1108H1974V1410H1954V1130H1570Z" />
      </g>
      <path d="M1599 1054 1625 1041V1067Z M1654 1054 1680 1041V1067Z" fill="#3e5f3a" strokeWidth={2} />
      <path d="M1625 1068V1086 M1625 1090V1092 M1625 1098V1116 M1680 1068V1086 M1680 1090V1092 M1680 1098V1116" strokeWidth={2} />
      <path d="M1570 1110H1973V1410 M1570 1128H1956V1410" strokeWidth={4} />
      <g fill="#e4fbe0" stroke="#4cae33" strokeWidth={4}>
        <rect x="1591" y="1110" width="125" height="19" />
        <rect x="1793" y="1110" width="125" height="19" />
        <rect x="1954" y="1140" width="21" height="201" />
        <rect x="1954" y="1386" width="21" height="30" />
      </g>
      <path d="M1589 1118H1718 M1791 1118H1920 M1964 1140V1342 M1964 1386V1410" strokeWidth={5} />
      <path d="M1640 1119H1668 M1842 1119H1870 M1963 1189V1216 M1963 1266V1291" strokeWidth={8} />
      {seatRows.map((y) =>
        seatCols.map((x) => (
          <g key={`${x}-${y}`}>
            <rect x={x + 1} y={y + 1} width="19" height="17" fill="#c9f9c0" stroke="#45982f" />
            <path d={`M${x + 19} ${y}v19`} strokeWidth={4} />
          </g>
        ))
      )}
      <g fill="#3e5f3a" fillOpacity={0.4} stroke="none">
        <rect x="1651" y="1214" width="87" height="11" />
        <rect x="1660" y="1235" width="95" height="10" />
      </g>
      <rect x="1651" y="1230" width="112" height="21" rx="1" strokeWidth={4} />
      <path d="M1570 1357H1582 M1621 1357H1957 M1702 1357V1400" strokeWidth={8} />
      <path d="M1624 1357H1957 M1702 1357V1400" stroke="#7b8f78" strokeWidth={1} />
      <rect x="1631" y="1353" width="27" height="8" fill="#4cae33" stroke="none" />
      <path d="M1582 1355V1321C1604 1322 1620 1337 1621 1355H1582" strokeWidth={2} />
      <rect x="1699" y="1335" width="14" height="24" rx="2" fill={GREEN} />
      <rect x="1701" y="1348" width="10" height="9" fill="#3e5f3a" stroke="none" />
      <rect x="1705" y="1341" width="3" height="3" fill="#fff" stroke="none" />
      <path d="M1704 1400V1410 M1704 1399H1739L1738 1410" />
      <path d="M1728 1361H1931V1379H1728Z M1754 1361V1379 M1779 1361V1379 M1804 1361V1379 M1830 1361V1379 M1855 1361V1379 M1880 1361V1379 M1906 1361V1379" strokeWidth={2} />
      <path d="M1814 1168V1178" stroke="#6f92c8" strokeWidth={2} />
    </g>
    <path d="M1902 1397V1423" stroke="#ec5a4e" strokeWidth={2} />
    <g fill="#000" stroke="none">
      {[[1570, 1016], [2234, 1016], [1570, 1411], [2234, 1411], [1902, 1213]].map(([x, y]) => (
        <rect key={`${x}-${y}`} x={x - 6} y={y - 6} width="12" height="12" rx="4" />
      ))}
    </g>
  </g>
);

// x, y centre, width, height of the blanked text lines in the title block
const bars: [number, number, number, number][] = [
  [2451, 590, 98, 12], [2451, 608, 98, 10], [2451, 627, 88, 10], [2451, 646, 87, 10],
  [2642, 590, 20, 12], [2642, 608, 20, 10], [2642, 627, 20, 10], [2643, 646, 20, 10],
  [2425, 680, 72, 11], [2425, 698, 80, 10], [2425, 717, 71, 10], [2425, 736, 72, 10], [2425, 754, 54, 10],
  [2610, 680, 50, 11], [2610, 697, 50, 11], [2610, 715, 50, 10], [2610, 733, 50, 10], [2610, 751, 50, 10], [2610, 769, 50, 10],
  [2430, 1153, 35, 8], [2483, 1153, 40, 8], [2568, 1153, 82, 8],
  [2433, 1204, 230, 8], [2433, 1218, 230, 8], [2433, 1231, 230, 8], [2433, 1244, 230, 8], [2433, 1257, 230, 8], [2433, 1271, 230, 8],
  [2424, 1546, 224, 10], [2424, 1580, 131, 10], [2424, 1596, 230, 10], [2424, 1613, 113, 10], [2424, 1630, 133, 10],
  [2424, 1749, 203, 10], [2424, 1765, 96, 10], [2424, 1782, 87, 10], [2424, 1799, 133, 10], [2424, 1815, 122, 10], [2424, 1832, 133, 10], [2424, 1848, 230, 10],
];

const rules = [
  466, 573, 663, 787, 806, 827, 847, 867, 886, 906, 926, 946, 966, 985, 1005, 1025, 1045, 1065, 1084, 1104, 1124, 1144,
  1164, 1181, 1295, 1403, 1436, 1563, 1732,
];

const TitleBlock = () => (
  <g fill="none" stroke={RED} strokeWidth={2}>
    <path d="M2416 446V1898 M2479 787V1164 M2563 787V1164" />
    {rules.map((y) => (
      <path key={y} d={`M2416 ${y}H2660`} />
    ))}
    <path d="M2660 1189H2424V1287H2660" />
    <g fill={PINK} stroke="none">
      {bars.map(([x, y, w, h], i) => (
        <rect key={i} x={x} y={y - h / 2} width={w} height={h} />
      ))}
    </g>
    <path d="M2425 584H2437L2431 595Z M2425 614H2437L2431 603Z" />
    <path d="M2425 622H2437L2431 633Z M2425 651H2437L2431 640Z" fill={RED} />
    <path d="M2610 583H2640V656H2610Z M2610 600H2640 M2610 619H2640 M2610 638H2640 M2610 583 2640 600 M2640 583 2610 600" />
    <path d="M2611 636C2624 634 2634 634 2637 621" strokeWidth={1} />
    <path d="M2610 600H2640L2628 610 2640 619H2610L2622 610Z" fill={RED} />
    <path d="M2611 655C2628 651 2633 653 2637 640H2640V656Z" fill={RED} strokeWidth={1} />
    <text x="2603" y="1366" fontSize="53" fontWeight="700" fontFamily="Liberation Sans" fill={RED} stroke="none">Bü</text>
  </g>
);

const Canvas = () => (
  <div className="relative min-h-0 flex-1 overflow-hidden bg-white">
    <svg className="absolute inset-0 h-full w-full" viewBox="426 446 2227 1452" preserveAspectRatio="xMinYMin slice">
      <rect x="426" y="446" width="128" height="1452" fill="#c3c3c3" />
      <rect x="554" y="446" width="4" height="1452" fill="#8482f5" />
      <rect x="558" y="446" width="2" height="1452" fill="#d5d5d5" />
      <rect x="560" y="446" width="2" height="1452" fill={RED} />
      <path d="M646 446V1898 M624 809H646" stroke={RED} strokeWidth={2} fill="none" />
      <path d="M547 1174H554" stroke="#8482f5" strokeWidth={2} />
      <OfficePlan />
      <LecturePlan />
      <TitleBlock />
      <g fill="#efefef" fillOpacity={0.8}>
        <rect x="1508" y="440" width="64" height="38" rx="6" />
        <rect x="1508" y="1864" width="64" height="32" rx="6" />
        <rect x="2622" y="1140" width="40" height="62" rx="6" fillOpacity={0.5} />
        <rect x="420" y="1140" width="40" height="62" rx="6" fillOpacity={0.04} />
      </g>
      <g stroke="#f2a75c" strokeWidth={3} strokeDasharray="10 4" fill="none">
        <path d="M1514 464H1566 M1514 1879H1566" />
        <path d="M445 1146V1198 M2637 1146V1198" strokeWidth={2} />
      </g>
    </svg>
  </div>
);

/* ---------- quick options bar ---------- */

const quickOptions: { text: string; on?: boolean; icon: React.ReactNode }[] = [
  { text: 'keine...', icon: <path d="M3 13 13 3 22 12 12 22Z M28 12C28 20 24 25 17 27 M24 15 28 10 31 16" /> },
  { text: 'keine...', icon: <path d="M2 9H29V22H2Z M8 22V17 M15 22V15 M22 22V17" /> },
  { text: 'Individ...', on: true, icon: <path d="M9 3H30L23 10H3Z M9 10 3 17H23L30 10 M9 17 3 24H23L30 17" strokeWidth={2.500} /> },
  { text: 'keine...', icon: <path d="M3 4H28V26H3Z M3 10H28 M3 22H28 M4 10 9 4 M12 10 17 4 M20 10 25 4 M4 20 12 11 M11 21 20 11 M19 21 27 12" /> },
  { text: '01 AR...', on: true, icon: <path d="M9 2V19L15 28 21 19V2 M9 19H21" strokeWidth={2.500} /> },
  { text: 'keine...', icon: <path d="M2 4H30V26H2Z M8 10H24V20H8Z" /> },
  { text: 'keine...', icon: <><path d="M12 8H3V22H12 M12 5C16 0 23 2 23 10 M19 7 23 11 27 7" /><path d="M15 15H27V28H15Z" fill="#c4c6c8" /></> },
  { text: 'keine...', icon: <><path d="M15 3 28 18H25V28H15Z M19 28V21H23V28" /><path d="M13 8 3 24V28H13" stroke="#c4c6c8" /></> },
  { text: 'keine...', icon: <path d="M3 19V11L13 3 17 5 M8 22V13L19 5 M12 27V16L18 11H27L30 15V27Z M16 20h4v4h-4Z M24 27V19h3V27" /> },
  { text: 'keine...', icon: <path d="M3 4H29 M6 1V7 M26 1V7 M3 13H29V28H3Z" /> },
];

const QuickBar = () => (
  <div className="flex h-9 shrink-0 items-center overflow-hidden whitespace-nowrap bg-[#ebebeb]">
    <div className="flex h-full w-[142px] shrink-0 items-center justify-between pl-1.5 pr-2 pt-1">
      <button aria-label="Zoom zurück">
        <Icon h={32}>
          <path d="M6 9A13 12 0 1 1 8 22 M2 15H16 M8 10 2 15 8 20 M10 24 4 31" />
        </Icon>
      </button>
      <button aria-label="Zoom vor" className="text-[#9a9ea0]">
        <Icon h={32}>
          <path d="M26 9A13 12 0 1 0 24 22 M33 15H19 M27 10 33 15 27 20 M23 24 29 31" />
        </Icon>
      </button>
      <button aria-label="Vergrößern">
        <Icon h={32}>
          <circle cx="16" cy="15" r="12" />
          <path d="M11 15H21 M16 10V20 M24 24 32 31" />
        </Icon>
      </button>
    </div>
    <div className="flex h-full w-[266px] shrink-0 items-center justify-between border-l-2 border-[#d3d3d3] pl-[18px] pr-5 pt-1">
      <button aria-label="Vorige">
        <Icon w={14} h={18}><path d="M12 2V16L2 9Z" /></Icon>
      </button>
      <span className="text-[#777]">73/73</span>
      <button aria-label="Nächste" className="text-[#8e9396]">
        <Icon w={14} h={18}><path d="M2 2V16L12 9Z" /></Icon>
      </button>
    </div>
    <button className="flex h-full w-[166px] shrink-0 items-center justify-between border-l-2 border-[#d3d3d3] pl-2.5 pr-[7px] pt-1">
      <Icon h={32}>
        <circle cx="16" cy="15" r="13" />
        <path d="M26 24 32 31 M16 7V10 M16 20V23 M8 15H11 M21 15H24" strokeWidth={3} />
      </Icon>
      <span className="text-[#222]">42%</span>
      <Right />
    </button>
    {quickOptions.map((option, i) => {
      const last = i === quickOptions.length - 1;
      return (
        <button
          key={i}
          disabled={!option.on}
          className={`flex h-full items-center border-l-2 border-[#d3d3d3] pl-3 pt-1 ${last ? 'min-w-0 flex-1' : 'w-[166px] shrink-0 pr-[7px]'} ${option.on ? '' : 'text-[#8e9396]'}`}
        >
          <Icon w={32} h={30}>{option.icon}</Icon>
          <span className={`flex-1 pl-3 text-left ${option.on ? 'text-[#222]' : 'text-[#b0b0b0]'}`}>{option.text}</span>
          <Right className={option.on ? 'text-[#222]' : 'text-[#999]'} />
        </button>
      );
    })}
  </div>
);

/* ---------- navigator ---------- */

const masters = [
  'Master A0 Querformat', 'Master A1 Querformat', 'Master A2 Querformat', 'Master A3 Detail Querformat',
  'Master A4 Detail Hochformat', 'Master A5 Detail Querformat', 'Master A0 Hochformat ohne Plankopf',
  'Master A1 Querformat ohne Plankopf', 'Master A4 Quer ohne Plankopf', 'Master A4 Hoch ohne Plankopf',
];

const SheetIcon: React.FC<{ filled?: boolean; checked?: boolean }> = ({ filled, checked }) => (
  <Icon w={38} h={34} className="text-[#5b6680]">
    <rect x="1" y="4" width="34" height="26" rx="2" fill={filled ? '#96a0ae' : '#fff'} />
    {checked ? (
      <g stroke="#27323a">
        <circle cx="27" cy="25" r="8" fill="#fff" stroke="#fff" />
        <circle cx="27" cy="25" r="7" fill="#fff" />
        <path d="M24 25 26 28 30 22" />
      </g>
    ) : (
      <path d="M21 30V20H35V30Z M21 25H35" fill="#fff" />
    )}
  </Icon>
);

const SmallSheet: React.FC<{ filled?: boolean }> = ({ filled }) => (
  <Icon w={28} h={24} className="text-[#5b6680]">
    <rect x="1" y="1" width="25" height="21" rx="2" fill={filled ? '#96a0ae' : 'none'} />
    <path d="M14 22V13H26V22Z M14 17.500H26" fill="#ebebeb" />
  </Icon>
);

const plusBadge = (
  <g stroke={BLUE}>
    <circle cx="30" cy="11" r="10" fill="#ebebeb" />
    <path d="M25 11H35 M30 6V16" />
  </g>
);

const slots = Array.from({ length: 11 }, (_, i) => i);

const Slider: React.FC<{ name: string; value: number }> = ({ name, value }) => (
  <div className="flex w-[466px] flex-col pt-3">
    <input
      type="range"
      aria-label={name}
      disabled
      defaultValue={value}
      className="h-8 w-full appearance-none bg-transparent [&::-webkit-slider-runnable-track]:h-2 [&::-webkit-slider-runnable-track]:rounded-full [&::-webkit-slider-runnable-track]:bg-[#e2e2e2] [&::-webkit-slider-thumb]:-mt-3 [&::-webkit-slider-thumb]:h-8 [&::-webkit-slider-thumb]:w-4 [&::-webkit-slider-thumb]:appearance-none [&::-webkit-slider-thumb]:rounded-full [&::-webkit-slider-thumb]:bg-[#f6f6f6] [&::-webkit-slider-thumb]:shadow-[0_1px_3px_rgba(0,0,0,0.3)]"
    />
    <div className="-mt-1 flex justify-between px-0.5">
      {slots.map((i) => (
        <span key={i} className="h-1.5 w-0.5 bg-[#b5b5b5]" />
      ))}
    </div>
  </div>
);

const recycle = <path d="M8 17C7 10 15 6 21 10 M17 5 22 10 17 14 M24 14C26 21 18 26 12 22 M16 27 11 22 16 18" />;

const Navigator = () => (
  <aside className="flex w-[575px] shrink-0 flex-col border-l-[3px] border-[#e5e5e5]">
    <div className="h-[19px] pt-2">
      <DragHandle className="w-[140px]" />
    </div>
    <div className="flex h-[54px] items-center pl-[15px] pr-1.5">
      <button aria-label="Projekt-Mappe" className="pt-1"><Icon w={38}>{houseIcon}</Icon></button>
      <div className="mx-[22px] h-10 w-0.5 bg-[#d3d3d3]" />
      <button aria-label="Ausschnitt-Mappe" className="w-[50px] pt-1">
        <Icon w={38}>
          <rect x="1" y="3" width="34" height="29" />
          <path d="M5 28V18L15 8 21 18V28Z M15 8 21 9 30 18V28H21" />
        </Icon>
      </button>
      <button aria-label="Layoutbuch" className="flex h-[54px] w-14 items-center justify-center rounded-lg bg-[#bfbec4] pt-1">
        <Icon w={38}>
          <path d="M2 32V12L11 2V24Z M11 8H36V32H2 M24 32V23H36 M24 27.500H36" />
        </Icon>
      </button>
      <button aria-label="Publisher-Sets" className="pl-3.5 pt-1">
        <Icon w={38}>
          <path d="M6 7V1H26V28H6V13 M1 7H17V12H1Z M9 31H29V5 M13 35H33V10" />
        </Icon>
      </button>
      <button aria-label="Menü" className="ml-auto flex h-11 w-[66px] items-center justify-between rounded-lg bg-white pl-[18px] pr-0.5 shadow-[0_1px_2px_rgba(0,0,0,0.3)]">
        <Icon w={26} h={24}><path d="M1 3H24 M1 12H24 M1 21H24" /></Icon>
        <Right />
      </button>
    </div>
    <div className="mt-[15px] flex h-[43px] items-center gap-3 pl-[5px] pr-1.5">
      <div className="flex h-full flex-1 items-center gap-3.5 border border-b-2 border-[#d9d9d9] border-b-[#a9a9a9] bg-white pl-3">
        <Icon w={28} h={28}>
          <circle cx="12" cy="11" r="9" />
          <path d="M18 18 26 26" strokeWidth={3} />
        </Icon>
        <input aria-label="Suche" placeholder="Layoutbuch durchsuchen" className="min-w-0 flex-1 placeholder:text-[#c0c0c0]" />
      </div>
      <button aria-label="Einstellungen" className="flex h-full w-[66px] items-center justify-between rounded-lg bg-white pl-2 pr-0.5 shadow-[0_1px_2px_rgba(0,0,0,0.3)]">
        <Icon w={32} h={34}>
          <circle cx="16" cy="17" r="5" />
          <path d="M13 5 14 1H18L19 5 23 6 26 4 29 7 27 11 28 14 31 15V19L28 20 27 23 29 27 26 30 23 28 19 29 18 33H14L13 29 9 28 6 30 3 27 5 23 4 20 1 19V15L4 14 5 11 3 7 6 4 9 6Z" />
        </Icon>
        <Right />
      </button>
    </div>

    <div className="mt-1.5 flex h-[573px]">
      <div className="h-full flex-1 overflow-hidden border-b-2 border-r-2 border-[#e2e2e2] bg-white text-black">
        <button className="flex h-12 w-full items-center bg-[#dcdcdc] pl-10 font-bold">
          <Icon w={12} h={18} className="mr-[14px] text-[#777]"><path d="M2 2 10 9 2 16" /></Icon>
          <SheetIcon />
          <span className="pl-1.5">A-5 Bürodetail</span>
        </button>
        <button className="flex h-12 w-full items-center pl-9">
          <Icon w={18} h={12} className="mr-3 text-[#777]"><path d="M2 2 9 10 16 2" /></Icon>
          <Icon w={38} h={34} className="text-[#5b6680]">
            <path d="M1 30V3H11L16 8H35V30Z M1 8H16" fill="#96a0ae" />
          </Icon>
          <span className="pl-1.5">Master</span>
        </button>
        {masters.map((name) => (
          <button key={name} className="flex h-12 w-full items-center whitespace-nowrap pl-[94px]">
            <SheetIcon filled checked={name === 'Master A2 Querformat'} />
            <span className="pl-1.5">{name}</span>
          </button>
        ))}
      </div>
      <div className="w-7 bg-[#fafafa] px-1.5 pt-[386px]">
        <div className="h-[164px] w-4 rounded-full bg-[#c2c2c2]" />
      </div>
    </div>
    <div className="h-[27px] bg-[#fafafa] pl-1.5 pt-[7px]">
      <div className="h-4 w-[454px] rounded-full bg-[#c2c2c2]" />
    </div>

    <div className="flex h-[70px] items-center gap-5 pl-2.5 pt-1">
      <button aria-label="Neues Layout">
        <Icon w={40} h={38}><path d="M18 12H3L1 14V36H31V26 M19 36V28H31 M19 32H31" />{plusBadge}</Icon>
      </button>
      <button aria-label="Neues Master-Layout">
        <Icon w={40} h={38}><path d="M18 12H3L1 14V36H31V26Z" fill="#8e9396" /><path d="M19 36V28H31V36Z M19 32H31" fill="#ebebeb" />{plusBadge}</Icon>
      </button>
      <button aria-label="Neue Untergruppe">
        <Icon w={40} h={38}><path d="M1 36V12H9L14 18H18 M1 18H14 M1 36H31V26" />{plusBadge}</Icon>
      </button>
      <button aria-label="Eigenschaften">
        <Icon w={40} h={38}>
          <path d="M6 8H33V29H6Z M6 11H33 M11 18H12 M17 18H28 M11 24H12 M17 24H28" stroke={BLUE} />
        </Icon>
      </button>
      <button aria-label="Aktualisieren" className="text-[#4ca64f]">
        <Icon w={40} h={38}>
          <circle cx="20" cy="19" r="14" />
          <g transform="translate(4 3)">{recycle}</g>
        </Icon>
      </button>
      <button aria-label="Löschen">
        <Icon w={40} h={38}><path d="M7 7 31 31 M31 7 7 31" stroke="#f0502c" strokeWidth={4} /></Icon>
      </button>
    </div>

    <button className="mx-1 flex h-11 items-center gap-4 rounded-md bg-[#d6d6d6] pl-[11px]">
      <Triangle open />
      <span className="text-[#222]">Beschreibungen</span>
    </button>
    <div className="mt-[7px] flex h-[34px] items-center gap-2 pl-2 pr-1.5">
      <SmallSheet />
      <PlainField name="Layout-ID" value="A-5" className="ml-px w-[126px]" />
      <PlainField name="Layoutname" value="Bürodetail" className="flex-1" />
    </div>
    <div className="mt-[7px] flex h-[34px] items-center gap-[9px] pl-2 pr-1.5">
      <SmallSheet filled />
      <button className="flex h-full flex-1 items-center justify-between rounded-lg bg-white pl-1 pr-0.5 shadow-[0_1px_2px_rgba(0,0,0,0.3)]">
        Master A2 Querformat
        <Right />
      </button>
    </div>
    <div className="mt-1 flex h-10 items-center gap-2 pl-2">
      <Icon w={28} h={28}>
        <path d="M3 13H15V26H3Z M4 4H14 M22 14V24" />
        <path d="M2 4 6 1V7Z M16 4 12 1V7Z M22 12 19 16H25Z M22 27 19 23H25Z" fill="currentColor" strokeWidth={1} />
      </Icon>
      0,594 / 0,420
    </div>
    <div className="mt-0.5 flex h-10 items-center pl-1.5">
      <Icon w={30} h={24}>
        <path d="M4 3H27V21H4 M4 3V21 M14 3V21 M19 3V21 M1 7H7 M1 12H7 M1 17H7" />
      </Icon>
    </div>
    <div className="mt-1.5 border-b-2 border-[#e2e2e2] px-1.5 pb-1.5">
      <button className="h-[42px] w-full rounded-lg bg-white shadow-[0_1px_2px_rgba(0,0,0,0.3)]">Einstellungen...</button>
    </div>
    <div className="h-[18px] pt-2">
      <DragHandle className="w-[140px]" />
    </div>

    <div className="flex h-14 gap-1 px-1.5">
      <button aria-label="Transparentpause" className="flex w-14 items-center justify-center rounded-lg bg-white shadow-[0_1px_2px_rgba(0,0,0,0.3)]">
        <Icon>{pagesIcon}</Icon>
      </button>
      <button aria-label="Referenz" disabled className="flex flex-1 items-center justify-end rounded-lg bg-[#f5f5f5] pr-0.5 shadow-[0_1px_2px_rgba(0,0,0,0.2)]">
        <Right className="text-[#999]" />
      </button>
    </div>
    <div className="flex h-[76px] items-center gap-6 pl-4 text-[#8e9396]">
      <Icon className="mr-[60px]">
        <path d="M8 20H1V1H23V10 M8 7 27 26 M8 14V7H15 M27 19V26H20" />
        <path d="M14 27V35H35V13H28" stroke="#9ab7f5" />
      </Icon>
      <Icon>
        <path d="M12 26H2V2H26V14" stroke="#9ab7f5" />
        <path d="M26 16V36 M16 26H36 M23 19 26 16 29 19 M23 33 26 36 29 33 M19 23 16 26 19 29 M33 23 36 26 33 29" />
      </Icon>
      <Icon>
        <path d="M12 31 2 10 20 2 28 18" stroke="#9ab7f5" />
        <path d="M33 18C34 26 28 31 20 31 M29 22 33 17 36 22 M24 27 19 31 24 35" />
      </Icon>
      <Icon>
        <path d="M12 26H2V2H26V8 M16 27V31H35V10H30" stroke="#9ab7f5" />
        <path d="M30 24C30 16 26 13 14 13 M20 7 14 13 20 19" />
      </Icon>
      <Icon>
        <circle cx="18" cy="18" r="16" />
        <g transform="translate(2 2)">{recycle}</g>
      </Icon>
    </div>

    <div className="border-t-2 border-[#d3d3d3] px-1.5 text-[#7b7b7b]">
      <div className="flex h-[54px] items-center">Transparentpause:</div>
      <div className="flex h-14 justify-between">
        <button aria-label="Farbe" disabled className="flex w-14 items-center justify-end gap-2 rounded-lg bg-[#f5f5f5] pr-0.5 shadow-[0_1px_2px_rgba(0,0,0,0.2)]">
          <span className="h-6 w-6 bg-[#8691f7]" />
          <Right className="text-[#888]" />
        </button>
        <Slider name="Transparentpause" value={46} />
        <button aria-label="Mehr" disabled className="flex w-[26px] items-center justify-center rounded-lg bg-[#f5f5f5] shadow-[0_1px_2px_rgba(0,0,0,0.2)]">
          <Right className="text-[#888]" />
        </button>
      </div>
      <div className="flex h-[50px] items-center">Aktiv:</div>
      <div className="flex h-14 gap-1.5">
        <button aria-label="Aktivfarbe" disabled className="flex w-14 items-center justify-end gap-1.5 rounded-lg bg-[#f5f5f5] pr-0.5 shadow-[0_1px_2px_rgba(0,0,0,0.2)]">
          <Icon w={28} h={28} className="text-[#8e9396]">
            <path d="M14 14V2A12 12 0 0 1 24 20Z" fill="#f1a08c" />
            <path d="M14 14 24 20A12 12 0 0 1 4 20Z" fill="#a4bff8" />
            <path d="M14 14 4 20A12 12 0 0 1 14 2Z" fill="#a0cba2" />
          </Icon>
          <Right className="text-[#888]" />
        </button>
        <Slider name="Aktiv" value={100} />
      </div>
    </div>
    <div className="mt-3 flex h-[76px] items-center border-t-2 border-[#d3d3d3] pl-[76px] pt-2 text-[#8e9396]">
      <Icon>
        <path d="M12 24H1V1H23V10" stroke="#9ab7f5" />
        <path d="M19 35 13 26 16 24 20 28V15H23V23 12H27V23 13H31V24 18H35V28L32 35" />
      </Icon>
      <span className="ml-3.5 flex h-[54px] w-14 items-center justify-center rounded-lg bg-[#e1e1e1]">
        <Icon>
          <path d="M12 24H2V2H23V10 M12 18V12H18" />
          <path d="M12 12H33V33H12Z M18 24H24V18" stroke="#a9c0f3" />
        </Icon>
      </span>
      <Icon className="ml-4">
        <path d="M18 1V35 M13 5H2V31H13 M13 13 9 18 13 23 M23 13 27 18 23 23" />
        <path d="M23 5H34V31H23" stroke="#9ab7f5" />
      </Icon>
      <Icon className="ml-6">
        <path d="M10 28H2V2H25V14 M3 13 13 3 M3 24 24 3 M10 27 24 12" />
        <path d="M9 26C15 17 28 17 35 26 28 35 15 35 9 26Z M11 35 34 17" />
      </Icon>
    </div>
  </aside>
);

const App: React.FC = () => (
  <div className="min-h-screen bg-white px-28 pb-[148px] pt-[76px]">
    <div className="overflow-hidden rounded-[22px] bg-[#ebebeb] font-['Inter','Liberation_Sans',sans-serif] text-[22px] leading-7 text-[#27323a] shadow-[0_0_2px_1px_rgba(0,0,0,0.35),0_36px_70px_4px_rgba(0,0,0,0.42)]">
      <header className="relative flex h-[58px] items-center justify-center gap-3 border-b-2 border-[#c6c6c6] bg-[#f3f4f6] pb-0.5">
        <div className="absolute left-4 flex gap-4">
          <button aria-label="Schließen" className="h-6 w-6 rounded-full border border-[#d8574d] bg-[#ed6a5e]" />
          <button aria-label="Minimieren" className="h-6 w-6 rounded-full border border-[#dca13a] bg-[#f5bf4f]" />
          <button aria-label="Zoomen" className="h-6 w-6 rounded-full border border-[#4fa63f] bg-[#61c554]" />
        </div>
        <Icon w={24} h={30} className="text-[#c9c9c9]">
          <path d="M1 1H16L23 8V29H1Z" fill="#fff" strokeWidth={1} />
          <path d="M3 8C4 1 9 1 10 8" stroke="#5a6fc0" />
          <path d="M5 13H18V25H5Z M11 13V25 M5 19H18" />
        </Icon>
        <h1 className="text-[26px] font-bold text-[#4a4a4a]">Deutsches Archicad Demoprojekt v29.pln [Nur lesen]</h1>
      </header>
      <Toolbars />
      <div className="h-0.5 bg-[#e5e5e5]" />
      <InfoBox />
      <div className="flex">
        <ToolPalette />
        <main className="flex min-w-0 flex-1 flex-col">
          <DocumentTabs />
          <Canvas />
          <QuickBar />
        </main>
        <Navigator />
      </div>
      <footer className="flex h-[50px] items-center justify-end gap-5 border-t-2 border-[#e3e3e3] pb-1 pr-6">
        <Icon w={36} h={30}>
          <path d="M1 20V2H27V4 M1 2H27" strokeWidth={3} />
          <path d="M8 9H33V28H8Z M8 10H33" strokeWidth={3} />
        </Icon>
        <div className="h-[30px] w-0.5 bg-[#8e9396]" />
        <span className="font-['Lato',sans-serif] text-[26px] font-medium">
          GRAPHISOFT <span className="font-light">ID</span>
        </span>
      </footer>
    </div>
  </div>
);

export default App;
